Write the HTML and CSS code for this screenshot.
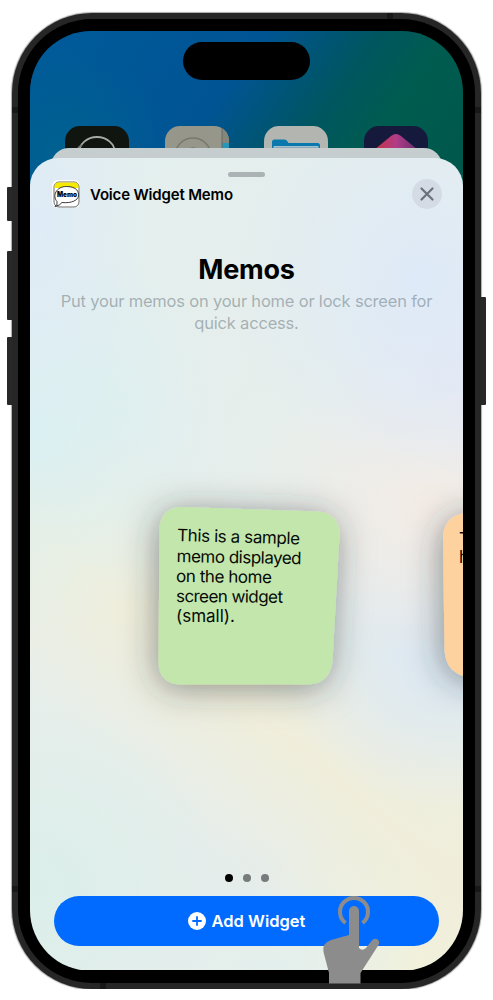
FILE: index.html
```html
<!DOCTYPE html>
<html lang="en">
<head>
<meta charset="utf-8">
<title>Voice Widget Memo</title>
<link rel="stylesheet" href="styles.css">
</head>
<body>
<div class="phone">
  <i class="key key-action"></i><i class="key key-up"></i><i class="key key-down"></i><i class="key key-power"></i>
  <i class="band band-tl"></i><i class="band band-tr"></i><i class="band band-bl"></i><i class="band band-br"></i><i class="band band-top"></i><i class="band band-bottom"></i>
  <div class="bezel">
    <div class="screen">
      <div class="home">
        <div class="island"></div>
        <div class="apps">
          <svg class="app" viewBox="0 0 64 64"><rect width="64" height="64" rx="15" fill="#11150f"/><ellipse cx="32" cy="27" rx="18" ry="16" fill="none" stroke="#a7aaa5" stroke-width="1.8"/><path d="M13 22l4-3" stroke="#777" stroke-width="2"/></svg>
          <svg class="app" viewBox="0 0 64 64"><rect width="64" height="64" rx="15" fill="#96968a"/><path d="M57 2.3Q64 6 64 15v2h-7z" fill="#85877c"/><path d="M57 17h7v20h-7z" fill="#2398b9"/><path d="M57 2v40" stroke="#686a62"/><circle cx="28" cy="30" r="18" fill="none" stroke="#77786f" stroke-width="1.5"/><circle cx="28" cy="25" r="4" fill="#7d7f76"/></svg>
          <svg class="app" viewBox="0 0 64 64"><rect width="64" height="64" rx="15" fill="#b3b6b0"/><path d="M8 40V16q0-2.500 2.500-2.500h10q2 0 3 2l1 1.500h29q2.500 0 2.500 2.500V40z" fill="#0878ad"/><path d="M10 40V20.500h44V40" fill="#83a9bd" stroke="#a9c1ca"/></svg>
          <svg class="app" viewBox="0 0 64 64"><defs><linearGradient id="gem"><stop offset="0" stop-color="#c7343e"/><stop offset=".5" stop-color="#b23c87"/><stop offset="1" stop-color="#65306f"/></linearGradient></defs><rect width="64" height="64" rx="15" fill="#15193b"/><path d="M10 24L27 10q5-4 10 0l17 14-22 22z" fill="url(#gem)"/></svg>
        </div>
      </div>
      <div class="sheet-back"></div>
      <main class="sheet">
        <div class="grabber"></div>
        <header class="head">
          <svg class="logo" viewBox="0 0 28 28"><rect width="28" height="28" rx="6" fill="#fff"/><rect x="2" y="2" width="25" height="25" rx="5" fill="#fff" stroke="#444" stroke-width=".8"/><path d="M2.500 8V6.500q0-4 4-4h16q4 0 4 4V8z" fill="#f6eb00"/><path d="M5 21.500C0 16 4 6.500 14.500 6.500S27 12 26.500 16 20 23.500 10 22.500q-2 3-7 4 3-2 2-5z" fill="#fff" stroke="#222" stroke-width=".9"/><text x="15" y="17" text-anchor="middle" textLength="20" lengthAdjust="spacingAndGlyphs">Memo</text></svg>
          <h2 class="app-name">Voice Widget Memo</h2>
          <svg class="close" viewBox="0 0 30 30"><circle cx="15" cy="15" r="15" fill="#d4dbe4"/><path d="M9.500 9.500l11 11m0-11l-11 11" stroke="#6c7079" stroke-width="2.200" stroke-linecap="round"/></svg>
        </header>
        <section class="intro">
          <h1>Memos</h1>
          <p>Put your memos on your home or lock screen for<br>quick access.</p>
        </section>
        <section class="preview">
          <svg class="notes" viewBox="0 0 434 300">
            <defs><filter id="shade" filterUnits="userSpaceOnUse" x="0" y="-60" width="560" height="420"><feDropShadow dx="-2" dy="4" stdDeviation="17" flood-color="#2a2e30" flood-opacity=".5"/></filter></defs>
            <path filter="url(#shade)" fill="#c3e6ac" d="M152 64L288 68.500C302 69.500 310 78 309.500 92L302.500 218C301 233 292 241.500 277 241.500L150 241.500C136 241 128.500 233 128.500 219L129.500 86C130 72 138 64 152 64z"/>
            <path filter="url(#shade)" fill="#fed29f" d="M438 70C422 70.500 413 80 413 96L414.500 208C415.500 223 424 232 438 234L480 236V70z"/>
            <g class="note-text">
              <text x="147" y="98" transform="rotate(1.600 147 98)" textLength="123">This is a sample</text>
              <text x="146.500" y="119" transform="rotate(1 146.500 119)" textLength="125">memo displayed</text>
              <text x="146" y="139" transform="rotate(.6 146 139)" textLength="96">on the home</text>
              <text x="146" y="159" transform="rotate(.4 146 159)" textLength="107">screen widget</text>
              <text x="146" y="179">(small).</text>
              <text x="429" y="101.500">T</text>
              <text x="429" y="120">h</text>
            </g>
          </svg>
        </section>
        <div class="dots"><i class="on"></i><i></i><i></i></div>
        <button class="add"><svg class="plus" viewBox="0 0 18 18"><circle cx="9" cy="9" r="9" fill="#fff"/><path d="M9 5v8M5 9h8" stroke="#026bff" stroke-width="1.800" stroke-linecap="round"/></svg><span>Add Widget</span></button>
      </main>
    </div>
  </div>
  <svg class="tap" viewBox="0 0 60 92"><path d="M23.500 31A14 14 0 1 1 40.500 31" fill="none" stroke="#8c8c8c" stroke-width="4"/><path d="M27 43V19a5 5 0 0 1 10 0v37q3 3.500 7 0l5.500-7c3-5 10-1 7 4L38.500 81v10.500H7V81L1.500 60Q0 51 9 48z" fill="#8c8c8c"/></svg>
</div>
</body>
</html>
```
FILE: styles.css
```css
* { box-sizing: border-box; }
body { margin: 0; background: #fff; font-family: Inter, "Liberation Sans", sans-serif; color: #000; }
h1, h2, p { margin: 0; }
.phone { position: relative; width: 469px; height: 976px; margin: 12.500px 0 0 12px; padding: 6px; border-radius: 80px; background: #262626; box-shadow: 0 0 1px 1px #aaa; }
.bezel { height: 100%; padding: 12px; border-radius: 74px; background: #000; }
.screen { position: relative; height: 100%; overflow: hidden; border-radius: 61px; padding-top: 127px; }
.key { position: absolute; width: 5px; background: #282828; border-radius: 1px 0 0 1px; }
.key-action { left: -5px; top: 174px; height: 34px; }
.key-up { left: -5px; top: 238px; height: 69px; }
.key-down { left: -5px; top: 324px; height: 68px; }
.key-power { right: -5px; top: 284px; height: 108px; border-radius: 0 1px 1px 0; }
.band { position: absolute; width: 6px; height: 6px; background: #181818; }
.band-tl { left: 0; top: 94px; }
.band-tr { right: 0; top: 94px; }
.band-bl { left: 0; bottom: 97px; }
.band-br { right: 0; bottom: 97px; }
.band-top { right: 88px; top: 0; }
.band-bottom { left: 88px; bottom: 0; }
.home { position: absolute; inset: 0 0 auto; height: 260px; padding-top: 11px; background: radial-gradient(circle at 30px 120px, #006190 0, rgba(0,97,144,0) 110px), linear-gradient(125deg, #005b9a 0, #005494 38%, #00565f 57%, #005c50 68%, #005348 100%); }
.island { width: 127px; height: 38px; margin: 0 auto; border-radius: 19px; background: #000; }
.apps { display: flex; justify-content: space-between; padding: 46px 35px 0; }
.app { width: 64px; height: 64px; }
.sheet-back { position: absolute; left: 21px; right: 21px; top: 117px; height: 40px; border-radius: 18px 18px 0 0; background: #c5cdcf; }
.sheet { position: relative; display: flex; flex-direction: column; align-items: center; height: 812px; border-radius: 28px 28px 0 0;
  background:
    radial-gradient(ellipse 120px 220px at 0 60px, #dfebf6, rgba(223,235,246,0)),
    radial-gradient(ellipse 190px 210px at 390px 120px, #deeaf8, rgba(222,234,248,0)),
    radial-gradient(ellipse 130px 120px at 433px 200px, #e8e8f4, rgba(232,232,244,0)),
    radial-gradient(ellipse 180px 150px at 400px 350px, #f4ece6, rgba(244,236,230,0)),
    radial-gradient(ellipse 170px 150px at 420px 500px, #dce8f3, rgba(220,232,243,0)),
    radial-gradient(ellipse 200px 210px at 0 270px, #daf0f3, rgba(218,240,243,0)),
    radial-gradient(ellipse 180px 190px at 10px 730px, #dbefea, rgba(219,239,234,0)),
    radial-gradient(ellipse 150px 90px at 240px 812px, #e3efed, rgba(227,239,237,0)),
    linear-gradient(40deg, rgba(240,239,218,0) 23%, #f0eedb 38%, rgba(240,239,218,0) 54%),
    linear-gradient(130deg, #e2efef 0, #e7eeeb 45%, #e5edeb 75%, #f2f2dc 95%); }
.grabber { width: 37px; height: 5px; margin-top: 14px; border-radius: 3px; background: #abb3b4; }
.head { display: flex; align-items: center; align-self: stretch; height: 30px; margin-top: 2px; padding: 0 21px 0 22px; }
.logo { width: 28px; height: 28px; margin-right: 10px; }
.logo text { font: 900 7px Inter, sans-serif; }
.app-name { flex: 1; padding-top: 2px; font-size: 15px; font-weight: 600; line-height: 30px; letter-spacing: -.17px; white-space: nowrap; }
.close { width: 30px; height: 30px; }
.intro { padding-top: 44px; text-align: center; }
.intro h1 { font-size: 27px; font-weight: 700; line-height: 34px; letter-spacing: -.2px; }
.intro p { margin-top: 3px; font-size: 16.500px; line-height: 22px; letter-spacing: -.2px; white-space: nowrap; color: rgba(100,115,120,.5); }
.preview { height: 300px; margin-top: 109px; align-self: stretch; }
.notes { display: block; width: 434px; height: 300px; overflow: visible; }
.note-text { font: 400 17px Inter, sans-serif; fill: #060a06; }
.dots { display: flex; gap: 10px; margin-top: 131px; }
.dots i { width: 8px; height: 8px; border-radius: 50%; background: #777b7b; }
.dots .on { background: #000; }
.add { display: flex; justify-content: center; align-items: center; gap: 6px; width: 385px; height: 50px; margin-top: 14px; padding: 0; border: 0; border-radius: 25px; background: #026bff; color: #fff; font: 600 16.500px Inter, sans-serif; }
.plus { width: 18px; height: 18px; }
.tap { position: absolute; left: 310px; top: 879px; width: 60px; height: 92px; }
```
